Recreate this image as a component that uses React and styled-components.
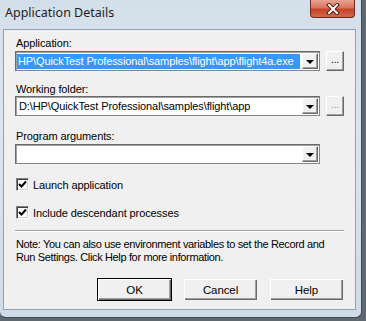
import React from 'react'
import styled, { createGlobalStyle } from 'styled-components'

const Global = createGlobalStyle`
  html, body {
    margin: 0;
    padding: 0;
    background: #5f6770;
    width: 366px;
    height: 321px;
    overflow: hidden;
  }
`

const Frame = styled.div`
  width: 362px;
  height: 318px;
  box-sizing: border-box;
  background: linear-gradient(180deg, #d3dfea 0%, #dbe5ef 40%, #cfdbe7 100%);
  border-right: 1px solid #3e4a58;
  border-bottom: 1px solid #3e4a58;
  border-radius: 0 0 6px 6px;
  padding: 0 5px 7px 3px;
  display: flex;
  flex-direction: column;
`

const TitleBar = styled.div`
  height: 29px;
  flex-shrink: 0;
  display: flex;
  align-items: flex-start;
  justify-content: space-between;
`

const Title = styled.div`
  font-family: "Noto Sans", "Open Sans", sans-serif;
  font-size: 12.5px;
  color: #1e1e1e;
  padding: 4px 0 0 2px;
`

const CloseBtn = styled.div`
  width: 45px;
  height: 18px;
  margin-right: 1px;
  box-sizing: border-box;
  border: 1px solid #6e2a22;
  border-top: none;
  border-radius: 0 0 4px 4px;
  background: linear-gradient(180deg, #e8a493 0%, #d9765f 45%, #c7422a 55%, #cf6a4f 100%);
  display: flex;
  align-items: center;
  justify-content: center;
`

const Client = styled.div`
  flex: 1;
  min-height: 0;
  background: #f0f0f0;
  border: 1px solid #8da2b8;
  padding: 7px 11px 0 11px;
  display: flex;
  flex-direction: column;
  font-family: "Liberation Sans", Arial, sans-serif;
  font-size: 11px;
  letter-spacing: -0.1px;
  color: #000;
`

const Label = styled.div`
  height: 13px;
  line-height: 13px;
  padding-left: 1px;
  margin-top: ${p => p.$top || 0}px;
  margin-bottom: ${p => p.$bottom ?? 1}px;
`

const Row = styled.div`
  display: flex;
  align-items: center;
  gap: 6px;
`

const Combo = styled.div`
  width: 305px;
  height: 20px;
  box-sizing: border-box;
  background: #fff;
  border: 1px solid #828790;
  border-top-color: #6a6a6a;
  border-left-color: #6a6a6a;
  box-shadow: inset 1px 1px 0 #a0a0a0;
  display: flex;
  align-items: stretch;
  padding: 1px;
`

const Value = styled.div`
  flex: 1;
  display: flex;
  align-items: center;
  padding-left: ${p => (p.$selected ? 0 : 2)}px;
  white-space: nowrap;
  overflow: hidden;
`

const Selected = styled.span`
  background: #3399ff;
  color: #fff;
  height: 15px;
  line-height: 15px;
  flex: 1;
  margin-right: 2px;
  padding-left: 1px;
`

const DropBtn = styled.div`
  width: 16px;
  box-sizing: border-box;
  background: #f0f0f0;
  border-top: 1px solid #fff;
  border-left: 1px solid #fff;
  border-right: 1px solid #696969;
  border-bottom: 1px solid #696969;
  box-shadow: inset -1px -1px 0 #a0a0a0;
  display: flex;
  align-items: center;
  justify-content: center;
`

const Arrow = styled.div`
  width: 0;
  height: 0;
  border-left: 4px solid transparent;
  border-right: 4px solid transparent;
  border-top: 4px solid #000;
  margin-top: 1px;
`

const Browse = styled.div`
  width: 18px;
  height: 20px;
  box-sizing: border-box;
  background: #f0f0f0;
  border-top: 1px solid #fff;
  border-left: 1px solid #fff;
  border-right: 1px solid #696969;
  border-bottom: 1px solid #696969;
  box-shadow: inset -1px -1px 0 #a0a0a0;
  display: flex;
  align-items: center;
  justify-content: center;
  font-size: 10px;
  color: ${p => (p.$dim ? '#9a9a9a' : '#000')};
  line-height: 1;
  padding-bottom: 2px;
`

const Check = styled.div`
  display: flex;
  align-items: center;
  gap: 4px;
  height: 13px;
  margin-top: ${p => p.$top}px;
  padding-left: 1px;
`

const Box = styled.div`
  width: 13px;
  height: 13px;
  box-sizing: border-box;
  background: #fff;
  border: 1px solid #fff;
  border-top-color: #808080;
  border-left-color: #808080;
  box-shadow: inset 1px 1px 0 #404040, inset -1px -1px 0 #d4d0c8;
  display: flex;
  align-items: center;
  justify-content: center;
`

const Separator = styled.div`
  height: 0;
  border-top: 1px solid #a0a0a0;
  border-bottom: 1px solid #fff;
  margin-top: 11px;
`

const Note = styled.div`
  margin-top: 6px;
  line-height: 13px;
  padding-left: 1px;
  white-space: nowrap;
  letter-spacing: -0.35px;
`

const Buttons = styled.div`
  display: flex;
  justify-content: flex-end;
  gap: 11px;
  margin-top: 14px;
`

const Button = styled.div`
  width: 75px;
  height: 23px;
  box-sizing: border-box;
  background: #f0f0f0;
  border: 1px solid ${p => (p.$default ? '#000' : '#f0f0f0')};
  box-shadow: inset 1px 1px 0 #fff, inset -1px -1px 0 #696969, inset -2px -2px 0 #a0a0a0;
  display: flex;
  align-items: center;
  justify-content: center;
  font-size: 11.5px;
`

const CheckMark = () => (
  <svg width="9" height="9" viewBox="0 0 9 9">
    <path d="M1 4 L3.5 6.5 L8 1.5" stroke="#000" strokeWidth="2" fill="none" />
  </svg>
)

const CloseX = () => (
  <svg width="14" height="12" viewBox="0 0 14 12">
    <path d="M3 2 L11 10 M11 2 L3 10" stroke="#5a1c14" strokeWidth="4" strokeLinecap="square" />
    <path d="M3 2 L11 10 M11 2 L3 10" stroke="#fff" strokeWidth="2" strokeLinecap="square" />
  </svg>
)

const ComboField = ({ value, selected }) => (
  <Combo>
    <Value $selected={selected}>
      {selected ? <Selected>{value}</Selected> : value}
    </Value>
    <DropBtn>
      <Arrow />
    </DropBtn>
  </Combo>
)

export default function App() {
  return (
    <>
      <Global />
      <Frame>
        <TitleBar>
          <Title>Application Details</Title>
          <CloseBtn>
            <CloseX />
          </CloseBtn>
        </TitleBar>
        <Client>
          <Label>Application:</Label>
          <Row>
            <ComboField value="HP\QuickTest Professional\samples\flight\app\flight4a.exe" selected />
            <Browse>...</Browse>
          </Row>
          <Label $top={12} $bottom={0}>Working folder:</Label>
          <Row>
            <ComboField value="D:\HP\QuickTest Professional\samples\flight\app" />
            <Browse $dim>...</Browse>
          </Row>
          <Label $top={14}>Program arguments:</Label>
          <Row>
            <ComboField value="" />
          </Row>
          <Check $top={14}>
            <Box><CheckMark /></Box>
            <span>Launch application</span>
          </Check>
          <Check $top={15}>
            <Box><CheckMark /></Box>
            <span>Include descendant processes</span>
          </Check>
          <Separator />
          <Note>
            Note: You can also use environment variables to set the Record and
            <br />
            Run Settings. Click Help for more information.
          </Note>
          <Buttons>
            <Button $default>OK</Button>
            <Button>Cancel</Button>
            <Button>Help</Button>
          </Buttons>
        </Client>
      </Frame>
    </>
  )
}
